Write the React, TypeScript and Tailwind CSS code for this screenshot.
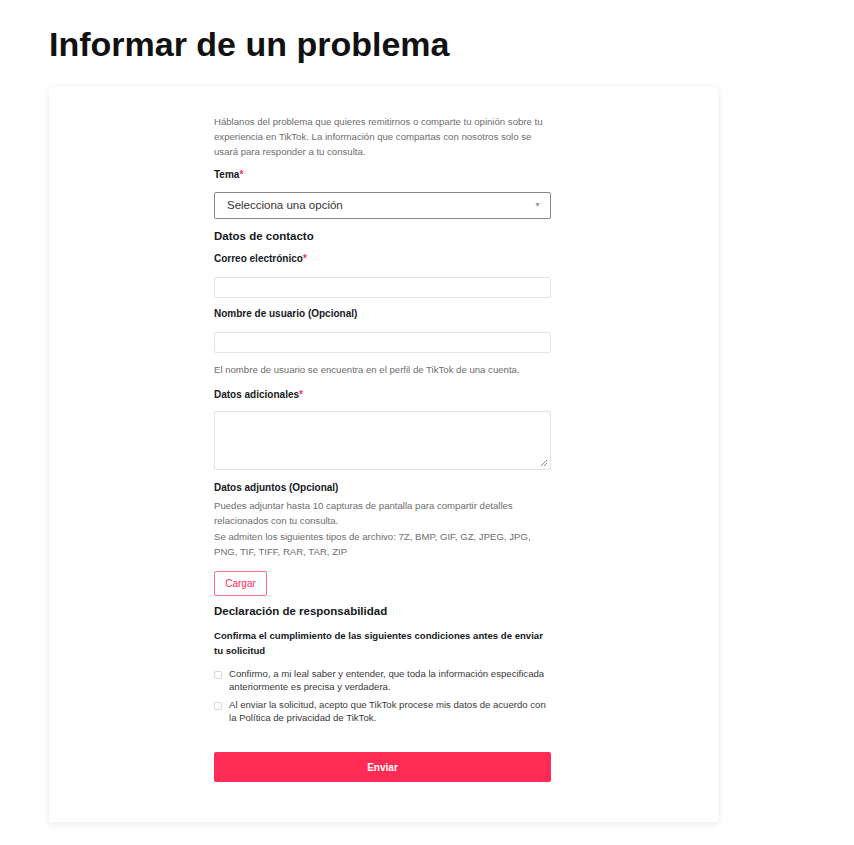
function Label({ children, required }: { children: React.ReactNode; required?: boolean }) {
    return (
        <div className="text-[10px] font-bold leading-[14px] text-[#161823]">
            {children}
            {required && <span className="text-[#fe2c55]">*</span>}
        </div>
    );
}

function Check({ children }: { children: React.ReactNode }) {
    return (
        <label className="flex items-start gap-[7px]">
            <span className="mt-[4px] h-[8px] w-[8px] shrink-0 rounded-[2px] border border-[#d9d9d9] bg-white" />
            <span className="text-[9.6px] leading-[13px] text-[#3a3a3a]">{children}</span>
        </label>
    );
}

export default function App() {
    return (
        <div className="min-h-[845px] bg-white font-['Liberation_Sans',Arial,sans-serif]">
            <div className="px-[49px] pt-[24px]">
                <h1 className="text-[34px] font-bold leading-[40px] text-[#111]">Informar de un problema</h1>

                <div className="mt-[23px] w-[669px] bg-white pb-[40px] pt-[27px] shadow-[0_2px_8px_rgba(0,0,0,0.09)]">
                    <div className="ml-[165px] w-[337px]">
                        <p className="text-[9.6px] leading-[15px] text-[#6e6e6e]">
                            Háblanos del problema que quieres remitirnos o comparte tu opinión sobre tu experiencia en TikTok. La información que compartas con nosotros solo se usará para responder a tu consulta.
                        </p>

                        <div className="mt-[9px]">
                            <Label required>Tema</Label>
                        </div>
                        <div className="mt-[10px] flex h-[27px] items-center justify-between rounded-[2px] border border-[#8a8a8a] pl-[12px] pr-[9px]">
                            <span className="text-[11.5px] text-[#333]">Selecciona una opción</span>
                            <span className="text-[7px] text-[#9a9a9a]">▼</span>
                        </div>

                        <div className="mt-[10px] text-[11.5px] font-semibold leading-[14px] text-[#161823]">Datos de contacto</div>

                        <div className="mt-[9px]">
                            <Label required>Correo electrónico</Label>
                        </div>
                        <div className="mt-[11px] h-[21px] rounded-[2px] border border-[#e3e3e3]" />

                        <div className="mt-[9px]">
                            <Label>Nombre de usuario (Opcional)</Label>
                        </div>
                        <div className="mt-[11px] h-[21px] rounded-[2px] border border-[#e3e3e3]" />
                        <p className="mt-[10px] text-[9.6px] leading-[13px] text-[#6e6e6e]">
                            El nombre de usuario se encuentra en el perfil de TikTok de una cuenta.
                        </p>

                        <div className="mt-[12px]">
                            <Label required>Datos adicionales</Label>
                        </div>
                        <div className="relative mt-[9px] h-[59px] rounded-[2px] border border-[#e3e3e3]">
                            <svg className="absolute bottom-[2px] right-[2px]" width="9" height="9" viewBox="0 0 9 9">
                                <path d="M8 2 L2 8 M8 5 L5 8" stroke="#8a8a8a" strokeWidth="1" />
                            </svg>
                        </div>

                        <div className="mt-[11px]">
                            <Label>Datos adjuntos (Opcional)</Label>
                        </div>
                        <p className="mt-[3px] text-[9.6px] leading-[15px] text-[#6e6e6e]">
                            Puedes adjuntar hasta 10 capturas de pantalla para compartir detalles relacionados con tu consulta.
                        </p>
                        <p className="mt-[1px] text-[9.6px] leading-[15px] text-[#6e6e6e]">
                            Se admiten los siguientes tipos de archivo: 7Z, BMP, GIF, GZ, JPEG, JPG, PNG, TIF, TIFF, RAR, TAR, ZIP
                        </p>

                        <button className="mt-[12px] flex h-[25px] w-[53px] items-center justify-center rounded-[2px] border border-[#f26d88] text-[10px] text-[#fe2c55]">
                            Cargar
                        </button>

                        <div className="mt-[8px] text-[11.5px] font-semibold leading-[14px] text-[#161823]">Declaración de responsabilidad</div>

                        <div className="mt-[10px] text-[9.6px] font-bold leading-[15px] text-[#161823]">
                            Confirma el cumplimiento de las siguientes condiciones antes de enviar tu solicitud
                        </div>

                        <div className="mt-[9px] flex flex-col gap-[5px]">
                            <Check>Confirmo, a mi leal saber y entender, que toda la información especificada anteriormente es precisa y verdadera.</Check>
                            <Check>Al enviar la solicitud, acepto que TikTok procese mis datos de acuerdo con la Política de privacidad de TikTok.</Check>
                        </div>

                        <button className="mt-[28px] flex h-[30px] w-full items-center justify-center rounded-[2px] bg-[#fe2c55] text-[10px] font-bold text-white">
                            Enviar
                        </button>
                    </div>
                </div>
            </div>
        </div>
    );
}
